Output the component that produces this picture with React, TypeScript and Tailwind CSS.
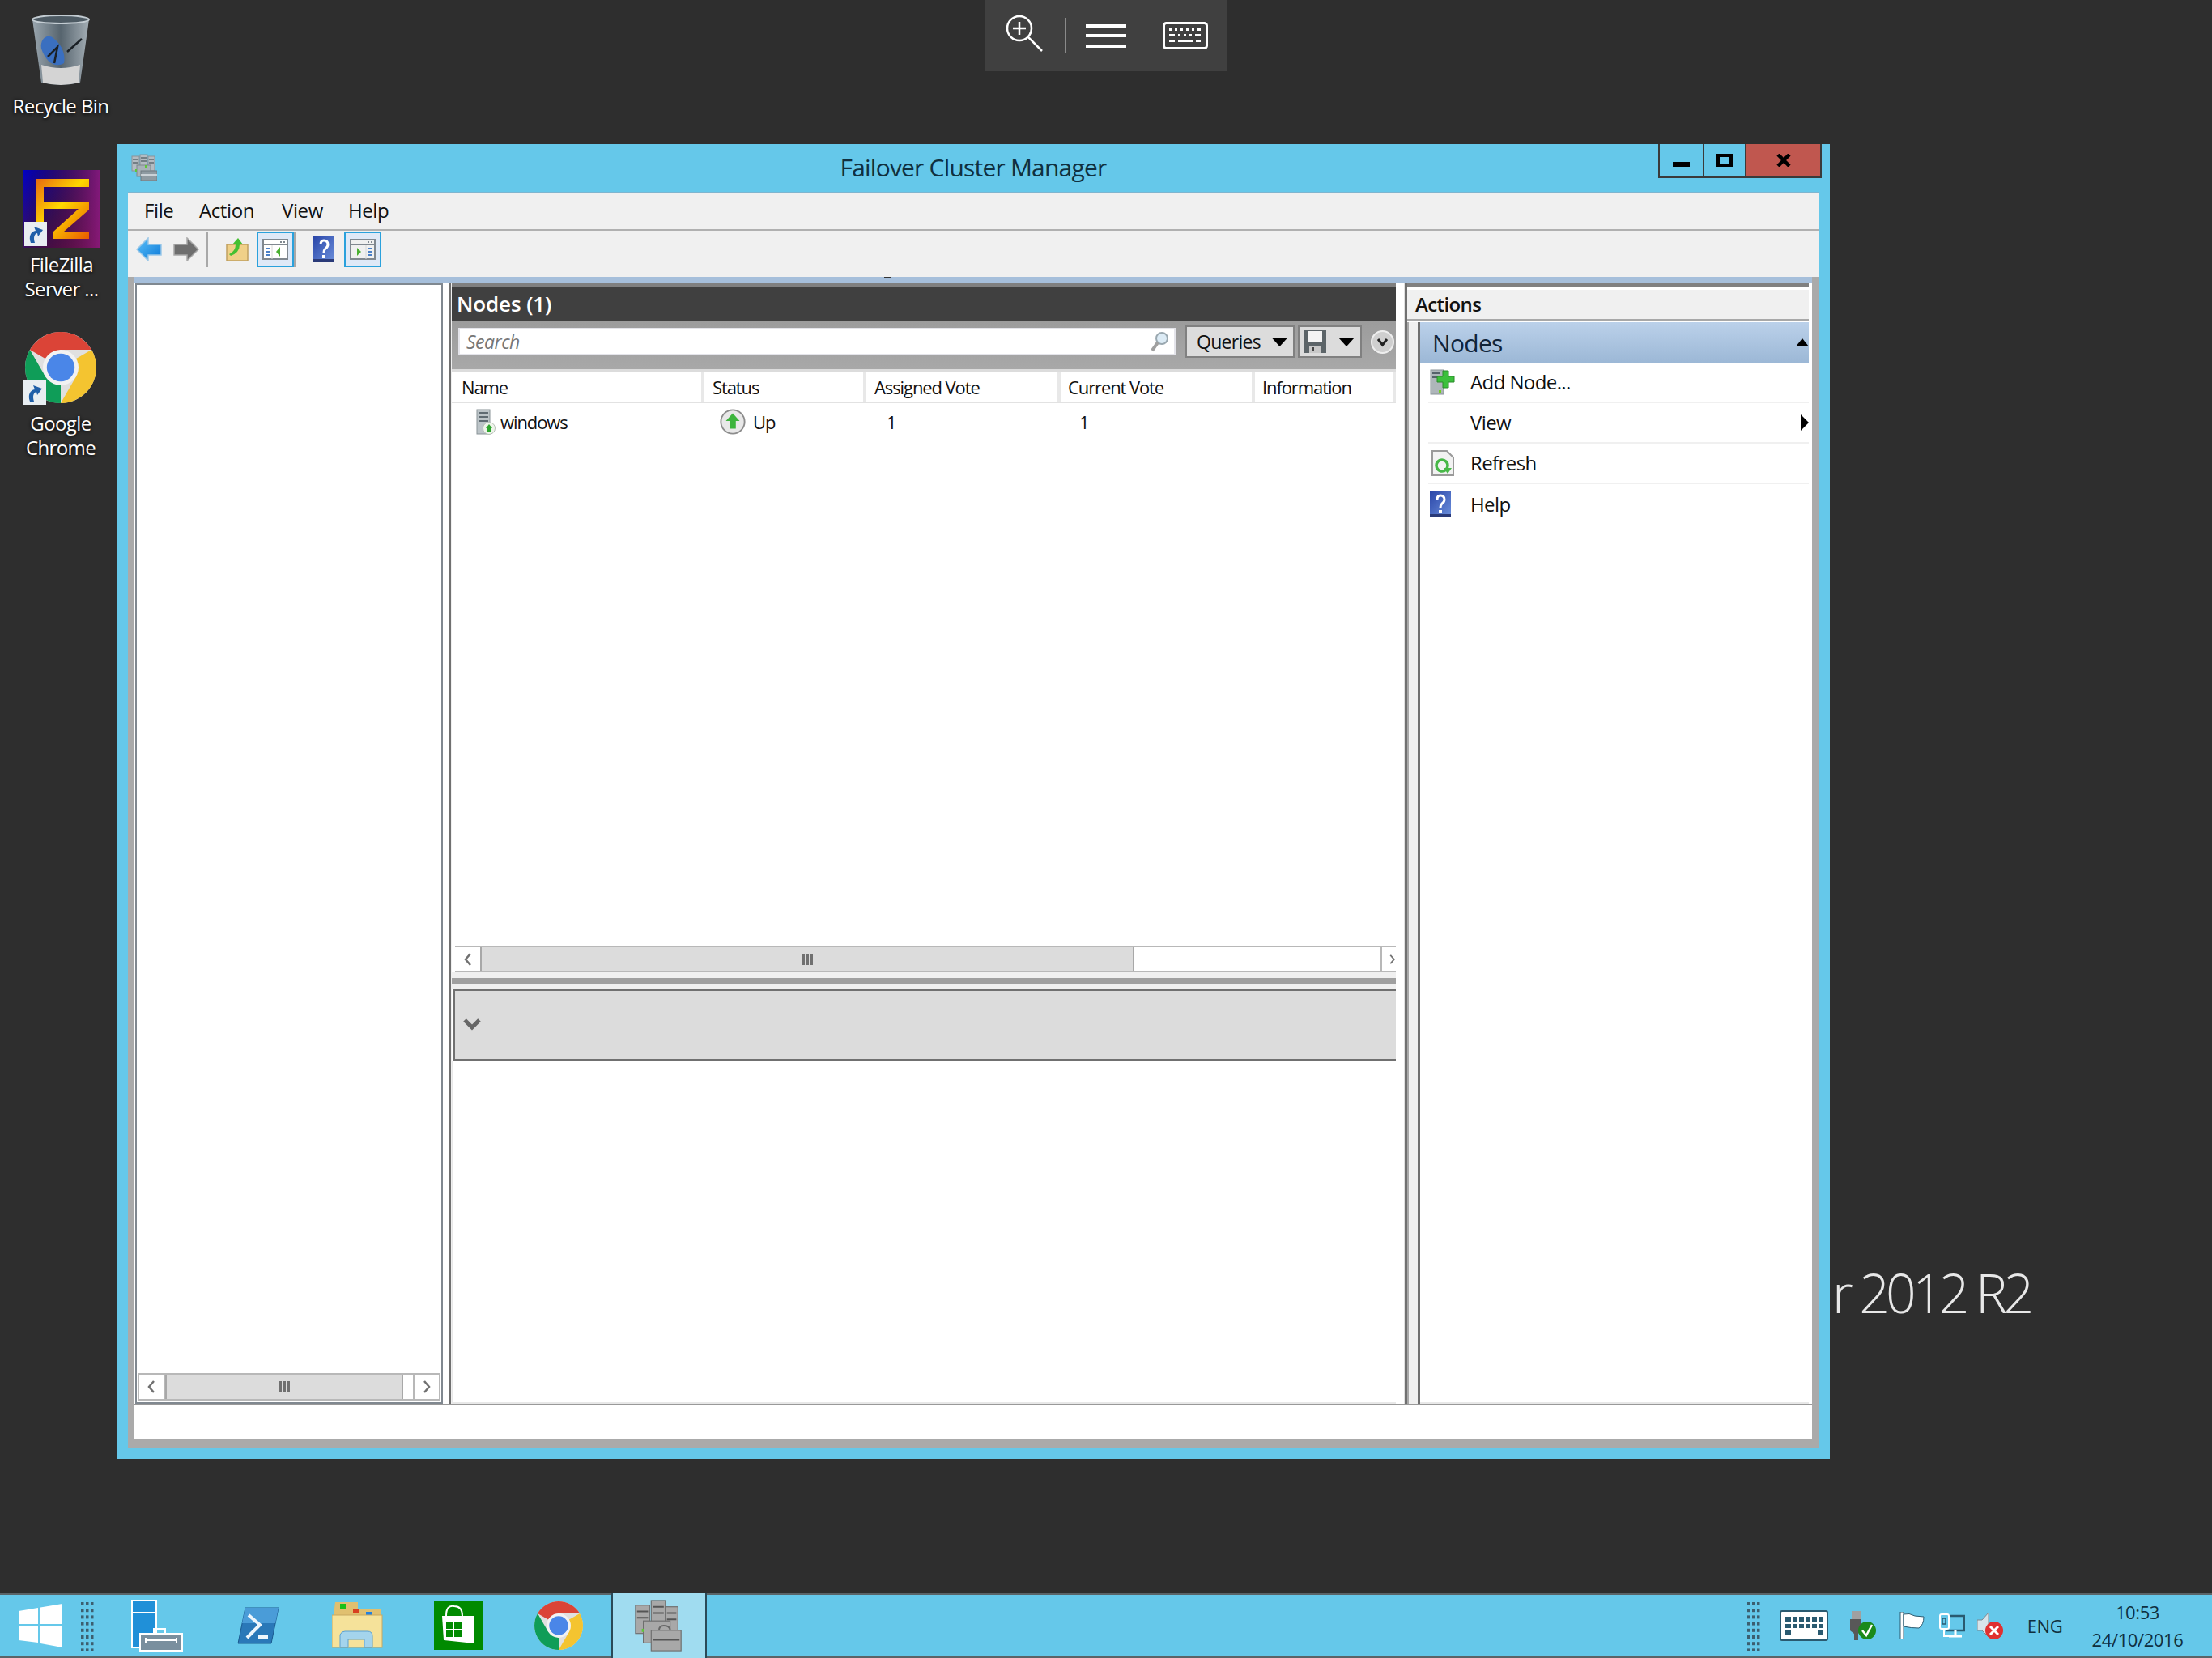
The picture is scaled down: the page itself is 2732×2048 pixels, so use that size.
import React from "react";

const FONT = "font-['Open_Sans','Noto_Sans',sans-serif]";

function Chrome({ size }: { size: number }) {
  const wedge = "M24 13 L43.05 13 A22 22 0 0 0 4.95 13 L14.47 18.5 Z";
  return (
    <svg width={size} height={size} viewBox="2 2 44 44">
      <circle cx="24" cy="24" r="22" fill="#e0e0e0" />
      <path d={wedge} fill="#db4437" />
      <path d={wedge} fill="#f4c430" transform="rotate(120 24 24)" />
      <path d={wedge} fill="#0f9d58" transform="rotate(240 24 24)" />
      <circle cx="24" cy="24" r="11" fill="#f2f2f2" />
      <circle cx="24" cy="24" r="8.6" fill="#4a86e8" />
    </svg>
  );
}

function ShortcutOverlay() {
  return (
    <svg width="28" height="30" viewBox="0 0 28 30">
      <rect width="28" height="30" fill="#e8eef2" />
      <path d="M8 26 C5 18 8 12 14 11 L12 6 L23 10 L17 18 L16 14 C12 15 11 20 13 26 Z" fill="#1f5fa8" />
    </svg>
  );
}

function RecycleBin() {
  return (
    <svg width="72" height="88" viewBox="0 0 72 88">
      <defs>
        <linearGradient id="rb" x1="0" x2="1" y1="0" y2="0">
          <stop offset="0" stopColor="#9aa6ae" />
          <stop offset="0.5" stopColor="#56646e" />
          <stop offset="1" stopColor="#a4aeb5" />
        </linearGradient>
      </defs>
      <path d="M1 6 L71 6 L60 84 Q36 90 12 84 Z" fill="url(#rb)" />
      <ellipse cx="36" cy="6" rx="35" ry="5" fill="#4d5a63" stroke="#c3ccd2" strokeWidth="2" />
      <path d="M12 62 Q36 70 60 62 L58 84 Q36 90 14 84 Z" fill="#d4d4d4" />
      <path d="M12 42 C10 30 20 22 28 30 C38 38 42 50 40 60 C30 66 18 60 12 42 Z" fill="#3a6fc0" />
      <path d="M20 52 L32 40 L28 60 M44 46 L62 30" stroke="#1a2026" strokeWidth="2.5" fill="none" />
    </svg>
  );
}

function FileZilla() {
  return (
    <svg width="96" height="96" viewBox="0 0 96 96">
      <defs>
        <linearGradient id="fzbg" x1="0" x2="1" y1="0" y2="1">
          <stop offset="0" stopColor="#0000c8" />
          <stop offset="0.5" stopColor="#3a1060" />
          <stop offset="1" stopColor="#7a1030" />
        </linearGradient>
        <linearGradient id="fzbg2" x1="0" x2="1" y1="0" y2="0">
          <stop offset="0" stopColor="#000000" stopOpacity="0" />
          <stop offset="1" stopColor="#8a1a80" stopOpacity="0.9" />
        </linearGradient>
        <linearGradient id="fzl" x1="0" x2="1" y1="0" y2="1">
          <stop offset="0" stopColor="#e86a10" />
          <stop offset="0.45" stopColor="#ffd800" />
          <stop offset="1" stopColor="#e85a00" />
        </linearGradient>
      </defs>
      <rect width="96" height="96" fill="url(#fzbg)" />
      <rect width="96" height="96" fill="url(#fzbg2)" />
      <path d="M17 11 H82 V21 H26 V39 H82 V49 L51 76 H82 V85 H38 V76 L69 48 H26 V72 H17 Z" fill="url(#fzl)" />
    </svg>
  );
}

function DesktopIcon(props: { x: number; y: number; lines: string[]; children: React.ReactNode; gap: number }) {
  return (
    <div className="absolute flex w-[150px] flex-col items-center" style={{ left: props.x, top: props.y }}>
      <div className="relative">{props.children}</div>
      <div className={`${FONT} text-center text-[24px] leading-[30px] tracking-[-0.6px] text-white [text-shadow:0_1px_4px_#000]`} style={{ marginTop: props.gap }}>
        {props.lines.map((l) => (
          <div key={l}>{l}</div>
        ))}
      </div>
    </div>
  );
}

function TopBar() {
  return (
    <div className="absolute left-[1216px] top-0 flex h-[88px] w-[300px] items-center bg-[#404040]">
      <svg width="56" height="56" viewBox="0 0 56 56" className="ml-[24px] mt-[2px]">
        <circle cx="19" cy="18" r="15" fill="none" stroke="#fff" strokeWidth="2.5" />
        <path d="M19 10 V26 M11 18 H27 M30 29 L47 46" stroke="#fff" strokeWidth="2.5" fill="none" />
      </svg>
      <div className="ml-[19px] h-[44px] w-[1px] bg-[#8a8a8a]" />
      <div className="ml-[25px] flex h-[29px] w-[50px] flex-col justify-between">
        <div className="h-[4px] bg-white" />
        <div className="h-[4px] bg-white" />
        <div className="h-[4px] bg-white" />
      </div>
      <div className="ml-[24px] h-[44px] w-[1px] bg-[#8a8a8a]" />
      <svg width="56" height="34" viewBox="0 0 56 34" className="ml-[20px]">
        <rect x="1.5" y="1.5" width="53" height="31" rx="3" fill="none" stroke="#fff" strokeWidth="3" />
        <path d="M8 8h4v3H8zM15 8h3v3h-3zM22 8h3v3h-3zM29 8h3v3h-3zM36 8h3v3h-3zM43 8h4v3h-4zM8 15h7v3H8zM19 15h3v3h-3zM26 15h3v3h-3zM33 15h3v3h-3zM40 15h7v3h-7zM8 22h7v3H8zM19 22h18v3H19zM41 22h6v3h-6z" fill="#fff" />
      </svg>
    </div>
  );
}

function ServerIcon({ className }: { className?: string }) {
  return (
    <svg width="32" height="34" viewBox="0 0 32 34" className={className}>
      <g fill="#b4bcc2" stroke="#8a9298" strokeWidth="1">
        <rect x="1" y="3" width="9" height="18" />
        <rect x="11" y="1" width="9" height="20" />
        <rect x="21" y="3" width="8" height="18" />
      </g>
      <path d="M2 7h7M2 11h7M12 5h7M12 9h7M22 7h6M22 11h6" stroke="#5f6b72" strokeWidth="1.5" />
      <rect x="7" y="14" width="17" height="14" fill="#a8b2b8" stroke="#7c868c" />
      <rect x="12" y="21" width="20" height="12" fill="#8f9ba2" stroke="#6f7a80" />
      <path d="M12 26h20" stroke="#dfe5e8" strokeWidth="1.5" />
      <rect x="5" y="19" width="2" height="3" fill="#5fc63a" />
      <rect x="17" y="14" width="2" height="3" fill="#5fc63a" />
    </svg>
  );
}

function TitleBar() {
  return (
    <div className="relative flex h-[59px] items-center justify-center">
      <ServerIcon className="absolute left-[18px] top-[12px]" />
      <span className={`${FONT} -mt-[2px] text-[30px] leading-none tracking-[-0.8px] text-[#10303f]`}>Failover Cluster Manager</span>
      <div className="absolute right-[10px] top-0 flex h-[42px] w-[202px] border-x-2 border-b-2 border-[#3a3a3a]">
        <div className="relative flex w-[55px] justify-center border-r-2 border-[#3a3a3a]">
          <div className="mt-[22px] h-[6px] w-[21px] bg-black" />
        </div>
        <div className="flex w-[52px] justify-center border-r-2 border-[#3a3a3a]">
          <div className="mt-[12px] h-[16px] w-[20px] border-[4px] border-black" />
        </div>
        <div className="flex flex-1 justify-center bg-[#c0574f]">
          <svg width="18" height="16" viewBox="0 0 18 16" className="mt-[12px]">
            <path d="M2 1 L16 15 M16 1 L2 15" stroke="#000" strokeWidth="4.5" />
          </svg>
        </div>
      </div>
    </div>
  );
}

function MenuBar() {
  return (
    <div className={`${FONT} flex h-[46px] items-center border-t-2 border-[#7fb5cf] bg-[#f0f0f0] pb-[3px] pl-[20px] text-[24px] tracking-[-0.4px] text-[#111]`}>
      <span className="w-[68px]">File</span>
      <span className="w-[102px]">Action</span>
      <span className="w-[82px]">View</span>
      <span>Help</span>
    </div>
  );
}

function HelpIcon({ w, h }: { w: number; h: number }) {
  return (
    <svg width={w} height={h} viewBox="0 0 26 32">
      <defs>
        <linearGradient id="hp" x1="0" x2="1" y1="0" y2="1">
          <stop offset="0" stopColor="#2a46a8" />
          <stop offset="1" stopColor="#6c90dc" />
        </linearGradient>
      </defs>
      <rect width="26" height="32" fill="url(#hp)" />
      <rect x="0" y="28" width="26" height="4" fill="#2a3a78" />
      <path d="M9 10 Q9 5 13 5 Q18 5 18 10 Q18 13 15 15 Q13 17 13 20" stroke="#fff" strokeWidth="3" fill="none" />
      <rect x="11" y="23" width="4" height="4" fill="#fff" />
    </svg>
  );
}

function PaneToggle({ flip }: { flip?: boolean }) {
  return (
    <div className="flex h-[44px] w-[46px] items-center justify-center border-2 border-[#2aa1dc] bg-[#dfe9f7]">
      <svg width="32" height="26" viewBox="0 0 32 26">
        <rect x="1" y="1" width="30" height="24" fill={flip ? "#f0f0f0" : "#fff"} stroke="#808890" strokeWidth="2" />
        <path d="M1 7H31" stroke="#808890" strokeWidth="2" />
        <path d="M22 4h2M26 4h2" stroke="#808890" strokeWidth="2" />
        {flip ? (
          <>
            <path d="M20 8V25" stroke="#d8d8d8" strokeWidth="1" />
            <path d="M23 12h5M23 16h5M23 20h5" stroke="#4a80c8" strokeWidth="2" />
            <path d="M9 11 L14 16 L9 21 Z" fill="#4ab030" />
          </>
        ) : (
          <>
            <path d="M12 8V25" stroke="#d8d8d8" strokeWidth="1" />
            <path d="M4 12h5M4 16h5M4 20h5" stroke="#4a80c8" strokeWidth="2" />
            <path d="M22 10 L17 16 L22 22 Z" fill="#4ab030" />
          </>
        )}
      </svg>
    </div>
  );
}

function ToolBar() {
  return (
    <div className="flex h-[59px] items-start border-t-2 border-[#b0b0b0] bg-[#f0f0f0] pl-[10px]">
      <svg width="32" height="30" viewBox="0 0 32 30" className="mt-[8px]">
        <defs>
          <linearGradient id="ba" x1="0" x2="1" y1="0" y2="1">
            <stop offset="0" stopColor="#5cc0f8" />
            <stop offset="1" stopColor="#0a78d8" />
          </linearGradient>
        </defs>
        <path d="M1 15 L15 1 V9 H31 V22 H15 V29 Z" fill="url(#ba)" stroke="#9cc8e8" strokeWidth="1.5" />
      </svg>
      <svg width="32" height="30" viewBox="0 0 32 30" className="ml-[14px] mt-[8px]">
        <path d="M31 15 L17 1 V9 H1 V22 H17 V29 Z" fill="#6e6e6e" stroke="#a8a8a8" strokeWidth="1.5" />
      </svg>
      <div className="ml-[9px] mt-[1px] h-[44px] w-[2px] bg-[#a8a8a8]" />
      <svg width="28" height="30" viewBox="0 0 28 30" className="ml-[22px] mt-[9px]">
        <path d="M1 8 H27 V28 H1 Z" fill="#f0d088" stroke="#c0a060" strokeWidth="1.5" />
        <path d="M4 20 Q12 16 12 8 L8 8 L15 0 L21 8 L17 8 Q17 18 6 22 Z" fill="#44c030" />
      </svg>
      <div className="ml-[10px] mt-[1px] flex">
        <PaneToggle />
        <div className="h-[44px] w-[2px] bg-[#a8a8a8]" />
      </div>
      <div className="ml-[22px] mt-[7px]">
        <HelpIcon w={26} h={32} />
      </div>
      <div className="ml-[12px] mt-[1px]">
        <PaneToggle flip />
      </div>
    </div>
  );
}

function Chevron({ dir }: { dir: "l" | "r" }) {
  return (
    <svg width="12" height="16" viewBox="0 0 12 16">
      <path d={dir === "l" ? "M9 1 L3 8 L9 15" : "M3 1 L9 8 L3 15"} fill="none" stroke="#707070" strokeWidth="2.5" />
    </svg>
  );
}

function Grip() {
  return (
    <div className="flex gap-[2px]">
      <div className="h-[14px] w-[3px] bg-[#707070]" />
      <div className="h-[14px] w-[3px] bg-[#707070]" />
      <div className="h-[14px] w-[3px] bg-[#707070]" />
    </div>
  );
}

function LeftPane() {
  return (
    <div className="flex w-[380px] flex-col border-2 border-[#808890] bg-white">
      <div className="flex-1" />
      <div className="mx-[1px] mb-[2px] flex h-[34px] border-2 border-[#b8b8b8] bg-white">
        <div className="flex w-[32px] items-center justify-center border-r-2 border-[#b8b8b8]">
          <Chevron dir="l" />
        </div>
        <div className="flex w-[294px] items-center justify-center border-2 border-y-0 border-[#a8a8a8] bg-[#dcdcdc]">
          <Grip />
        </div>
        <div className="flex-1" />
        <div className="flex w-[32px] items-center justify-center border-l-2 border-[#b8b8b8]">
          <Chevron dir="r" />
        </div>
      </div>
    </div>
  );
}

function Triangle({ w, h, className }: { w: number; h: number; className?: string }) {
  return (
    <svg width={w} height={h} viewBox="0 0 20 11" className={className}>
      <path d="M0 0 H20 L10 11 Z" fill="#000" />
    </svg>
  );
}

function SearchBar() {
  return (
    <div className="flex h-[59px] items-start bg-gradient-to-b from-[#9c9c9c] to-[#a8a8a8] pl-[8px]">
      <div className={`${FONT} mt-[8px] flex h-[34px] w-[886px] items-center justify-between border-2 border-[#e4e4ea] bg-white pl-[8px] pr-[6px] text-[23px] italic tracking-[-0.5px] text-[#777]`}>
        <span>Search</span>
        <svg width="24" height="26" viewBox="0 0 24 26">
          <circle cx="15" cy="9" r="7" fill="#dcebf5" stroke="#9aa8b0" strokeWidth="2" />
          <path d="M10 14 L3 24" stroke="#a0a0a0" strokeWidth="4" />
        </svg>
      </div>
      <div className={`${FONT} ml-[12px] mt-[5px] flex h-[40px] w-[135px] items-center border-2 border-[#808080] bg-[#dcdcdc] pl-[12px] text-[23px] tracking-[-0.7px] text-[#111]`}>
        <span>Queries</span>
        <Triangle w={21} h={11} className="ml-auto mr-[6px]" />
      </div>
      <div className="ml-[4px] mt-[5px] flex h-[40px] w-[79px] items-center border-2 border-[#808080] bg-[#dcdcdc] pl-[5px]">
        <svg width="28" height="28" viewBox="0 0 28 28">
          <rect width="28" height="28" fill="#5c6468" />
          <rect x="5" y="1" width="18" height="14" fill="#f4f4f4" />
          <rect x="7" y="19" width="14" height="9" fill="#c8c8c8" />
          <rect x="10" y="21" width="3" height="5" fill="#444" />
        </svg>
        <Triangle w={20} h={11} className="ml-[15px]" />
      </div>
      <div className="ml-[11px] mt-[11px] flex h-[29px] w-[29px] items-center justify-center rounded-full border-2 border-[#eeeeee] bg-[#cfcfcf]">
        <svg width="15" height="12" viewBox="0 0 15 12">
          <path d="M2 2 L7.5 9 L13 2" fill="none" stroke="#222" strokeWidth="3" />
        </svg>
      </div>
    </div>
  );
}

function Cell({ w, text, pad }: { w?: number; text: string; pad: number }) {
  return (
    <div className={`flex items-center border-r-4 border-[#e8e8e8] ${w ? "" : "flex-1 border-r-0"}`} style={{ width: w, paddingLeft: pad }}>
      {text}
    </div>
  );
}

function NodeIcon() {
  return (
    <svg width="24" height="32" viewBox="0 0 24 32">
      <rect x="1" y="1" width="16" height="30" fill="#bcc4c8" stroke="#8a9498" />
      <path d="M3 5h12M3 10h12M3 15h12" stroke="#5f6b72" strokeWidth="2" />
      <circle cx="16" cy="24" r="7.5" fill="#eef4ea" stroke="#b8c0b8" />
      <path d="M16 19 L20 24 H18 V28 H14 V24 H12 Z" fill="#2ea52e" />
    </svg>
  );
}

function Table() {
  return (
    <div className={`${FONT} flex flex-1 flex-col bg-white text-[22px] tracking-[-1.1px] text-[#111]`}>
      <div className="h-[4px] bg-[#dcdcdc]" />
      <div className="flex h-[38px] border-b-2 border-[#e2e2e2]">
        <Cell w={312} pad={12} text="Name" />
        <Cell w={200} pad={10} text="Status" />
        <Cell w={240} pad={10} text="Assigned Vote" />
        <Cell w={240} pad={9} text="Current Vote" />
        <Cell pad={9} text="Information" />
      </div>
      <div className="flex h-[46px] items-center">
        <div className="flex w-[312px] items-center pl-[30px]">
          <NodeIcon />
          <span className="ml-[6px]">windows</span>
        </div>
        <div className="flex w-[200px] items-center pl-[18px]">
          <svg width="34" height="34" viewBox="0 0 36 36">
            <circle cx="18" cy="18" r="15.5" fill="#e8e8e8" stroke="#8c8c8c" strokeWidth="2" />
            <path d="M18 7 L27 17 H22 V27 H14 V17 H9 Z" fill="#3cb43c" />
          </svg>
          <span className="ml-[8px]">Up</span>
        </div>
        <div className="w-[240px] pl-[25px]">1</div>
        <div className="w-[240px] pl-[23px]">1</div>
      </div>
    </div>
  );
}

function CenterPane() {
  return (
    <div className="flex w-[1166px] flex-col overflow-hidden bg-white">
      <div className="h-[4px] bg-[#808080]" />
      <div className={`${FONT} flex h-[43px] items-center bg-[#404040] pl-[6px] text-[26px] font-semibold tracking-[-0.1px] text-white`}>Nodes (1)</div>
      <SearchBar />
      <Table />
      <div className="ml-[4px] flex h-[33px] border-y-2 border-[#b8b8b8] bg-white">
        <div className="flex w-[31px] items-center justify-center">
          <Chevron dir="l" />
        </div>
        <div className="flex w-[808px] items-center justify-center border-2 border-y-0 border-[#a8a8a8] bg-[#dcdcdc]">
          <Grip />
        </div>
        <div className="flex-1" />
        <div className="flex w-[19px] items-center justify-center overflow-hidden border-l-2 border-[#b8b8b8] pl-[8px]">
          <Chevron dir="r" />
        </div>
      </div>
      <div className="h-[7px] bg-[#f0f0f0]" />
      <div className="h-[8px] bg-[#a0a0a0]" />
      <div className="h-[6px] bg-[#f0f0f0]" />
      <div className="ml-[2px] flex h-[88px] items-center border-y-2 border-l-2 border-[#707070] bg-[#dcdcdc] pl-[10px]">
        <svg width="22" height="16" viewBox="0 0 22 16">
          <path d="M2 2 L11 11 L20 2" fill="none" stroke="#666" strokeWidth="5" />
        </svg>
      </div>
      <div className="h-[424px] border-b-2 border-l-2 border-[#e8e8e8]" />
    </div>
  );
}

function ActionRow({ label, icon, arrow, last }: { label: string; icon?: React.ReactNode; arrow?: boolean; last?: boolean }) {
  return (
    <div className={`ml-[10px] flex h-[50px] items-center ${last ? "" : "border-b-2 border-[#f0f0f0]"}`}>
      <div className="flex w-[52px] items-center justify-start pl-[2px]">{icon}</div>
      <span>{label}</span>
      {arrow ? (
        <svg width="10" height="20" viewBox="0 0 10 20" className="ml-auto">
          <path d="M0 0 L10 10 L0 20 Z" fill="#000" />
        </svg>
      ) : null}
    </div>
  );
}

function ActionsPane() {
  return (
    <div className="flex flex-1 flex-col bg-white">
      <div className="border-t-[4px] border-[#808080]" />
      <div className="h-[4px] bg-white" />
      <div className={`${FONT} flex h-[38px] items-center border-b-2 border-[#a8a8a8] bg-[#f0f0f0] pl-[10px] text-[24px] font-semibold tracking-[-0.6px] text-[#111]`}>Actions</div>
      <div className="h-[2px] bg-white" />
      <div className="flex flex-1">
        <div className="flex w-[16px]">
          <div className="w-[2px] bg-[#a8a8a8]" />
          <div className="flex-1 bg-[#f0f0f0]" />
          <div className="w-[3px] bg-[#707070]" />
        </div>
        <div className={`${FONT} flex flex-1 flex-col border-b-2 border-[#e8e8e8] text-[24px] tracking-[-0.6px] text-[#111]`}>
          <div className="flex h-[50px] items-center justify-between bg-gradient-to-b from-[#bbd1ea] to-[#9cb8d6] pl-[15px] text-[30px] tracking-[-0.7px] text-[#10243a]">
            <span>Nodes</span>
            <svg width="16" height="10" viewBox="0 0 16 10">
              <path d="M0 10 L8 0 L16 10 Z" fill="#000" />
            </svg>
          </div>
          <ActionRow
            label="Add Node..."
            icon={
              <svg width="32" height="32" viewBox="0 0 32 32">
                <rect x="1" y="1" width="16" height="30" fill="#aeb6ba" stroke="#8a9498" />
                <path d="M3 5h10M3 10h10" stroke="#55626a" strokeWidth="2" />
                <rect x="11" y="26" width="3" height="3" fill="#70d020" />
                <path d="M16 2h7v7h7v7h-7v7h-7v-7H9V9h7z" fill="#3cc03c" stroke="#2a8a2a" />
              </svg>
            }
          />
          <ActionRow label="View" arrow />
          <ActionRow
            label="Refresh"
            icon={
              <svg width="28" height="32" viewBox="0 0 28 32" className="ml-[2px]">
                <path d="M1 1 H19 L27 9 V31 H1 Z" fill="#f2f2f2" stroke="#9a9a9a" strokeWidth="2" />
                <circle cx="13" cy="19" r="7" fill="none" stroke="#48b848" strokeWidth="3.5" />
                <path d="M15 22 L25 22 L20 29 Z" fill="#48b848" />
              </svg>
            }
          />
          <ActionRow label="Help" last icon={<HelpIcon w={26} h={32} />} />
        </div>
      </div>
    </div>
  );
}

function Splitter() {
  return (
    <div className="flex w-[14px] bg-[#f0f0f0]">
      <div className="w-[10px] bg-white" />
      <div className="w-[1px] bg-[#e0e0e0]" />
      <div className="w-[3px] bg-[#707070]" />
    </div>
  );
}

function AppWindow() {
  return (
    <div className="absolute left-[144px] top-[178px] flex h-[1624px] w-[2116px] flex-col bg-[#65c8ea]">
      <TitleBar />
      <div className="mx-[14px] flex flex-1 flex-col">
        <MenuBar />
        <ToolBar />
        <div className="flex flex-1 flex-col bg-[#aaaaaa] px-[8px] pb-[10px]">
          <div className="relative h-[8px] bg-[#a6bfdb]">
            <div className="absolute left-[926px] top-0 h-[2px] w-[8px] bg-[#333]" />
          </div>
          <div className="flex h-[1384px] bg-white pl-[1px]">
            <LeftPane />
            <div className="flex w-[11px] bg-[#f0f0f0]">
              <div className="w-[7px] bg-white" />
              <div className="w-[3px] bg-[#707070]" />
            </div>
            <CenterPane />
            <Splitter />
            <ActionsPane />
            <div className="w-[4px] bg-white" />
          </div>
          <div className="flex-1 border-t-2 border-[#999] bg-white" />
        </div>
      </div>
      <div className="h-[14px]" />
    </div>
  );
}

function Gripper({ className }: { className?: string }) {
  return (
    <svg width="16" height="62" viewBox="0 0 16 62" className={className}>
      {Array.from({ length: 8 }).map((_, r) =>
        [0, 6, 12].map((c) => <rect key={`${r}-${c}`} x={c} y={r * 8.2 + 2} width="3.5" height="4" fill="#3c5f70" />)
      )}
    </svg>
  );
}

function Taskbar() {
  return (
    <div className={`${FONT} flex h-[80px] items-center border-y-2 border-[#5a6468] bg-[#65c8ea]`}>
      <svg width="54" height="54" viewBox="0 0 54 54" className="ml-[23px]">
        <path d="M0 9 L24 5 V25 H0 Z M27 4.5 L54 0 V25 H27 Z M0 28 H24 V48 L0 45 Z M27 28 H54 V54 L27 49 Z" fill="#fff" />
      </svg>
      <Gripper className="ml-[23px]" />
      <svg width="64" height="64" viewBox="0 0 64 64" className="ml-[46px]">
        <rect x="1" y="1" width="30" height="58" fill="#2090d8" stroke="#fff" strokeWidth="2" />
        <path d="M0 16 H32" stroke="#fff" strokeWidth="2" />
        <rect x="28" y="36" width="14" height="8" fill="none" stroke="#fff" strokeWidth="2" />
        <rect x="11" y="42" width="52" height="21" fill="#7a8f9e" stroke="#fff" strokeWidth="2" />
        <path d="M18 50 H56 M18 47 V53 M56 47 V53" stroke="#fff" strokeWidth="2" />
      </svg>
      <svg width="52" height="46" viewBox="0 0 52 46" className="ml-[67px]">
        <path d="M10 1 H51 L42 45 H1 Z" fill="#2a78b8" stroke="#1a5a90" />
        <path d="M10 1 H51 L47 20 H6 Z" fill="#4a9cd8" />
        <path d="M14 10 L28 22 L12 38" fill="none" stroke="#eef6fc" strokeWidth="4" />
        <rect x="26" y="35" width="12" height="4" fill="#eef6fc" />
      </svg>
      <svg width="64" height="58" viewBox="0 0 64 58" className="ml-[65px]">
        <path d="M4 0 H32 V8 H60 V16 H2 Z" fill="#e0c070" />
        <rect x="10" y="2" width="7" height="6" fill="#18c018" />
        <rect x="26" y="8" width="7" height="6" fill="#d84020" />
        <rect x="42" y="12" width="7" height="6" fill="#2080e0" />
        <rect x="0" y="16" width="62" height="40" fill="#f5e29a" stroke="#c8a860" />
        <path d="M10 56 V40 Q12 36 16 36 H44 Q50 36 50 42 V56 H40 V46 H20 V56 Z" fill="#a4d4ec" stroke="#5aa0d0" />
      </svg>
      <svg width="60" height="60" viewBox="0 0 60 60" className="ml-[62px]">
        <rect width="60" height="60" fill="#008a00" />
        <path d="M15 18 Q15 4 25 6 Q35 6 35 18" fill="none" stroke="#fff" strokeWidth="2" />
        <path d="M10 18 H50 V52 L12 48 Z" fill="#fff" />
        <rect x="15" y="26" width="8" height="8" fill="#008a00" />
        <rect x="25" y="26" width="9" height="8" fill="#008a00" />
        <rect x="15" y="36" width="8" height="8" fill="#008a00" />
        <rect x="25" y="36" width="9" height="8" fill="#008a00" />
      </svg>
      <div className="ml-[64px]">
        <Chrome size={60} />
      </div>
      <div className="ml-[35px] -my-[2px] flex h-[80px] w-[118px] items-center justify-center border-x-2 border-[#2a4a58] bg-[#a0dcf0]">
        <svg width="68" height="66" viewBox="0 0 32 34">
          <g fill="#a8a8a8" stroke="#6e6e6e" strokeWidth="0.6">
            <rect x="1" y="4" width="9" height="18" />
            <rect x="11" y="1" width="9" height="20" />
            <rect x="20" y="5" width="8" height="18" />
            <rect x="6" y="14" width="17" height="14" />
            <rect x="11" y="20" width="19" height="13" />
          </g>
          <path d="M2 8h7M2 12h7M12 5h7M12 9h7M21 9h6M21 13h6M12 26h17" stroke="#555" strokeWidth="1" />
          <path d="M16 20 Q16 17 19 17 Q23 17 23 20" fill="none" stroke="#666" strokeWidth="1" />
          <rect x="5" y="19" width="1.5" height="2" fill="#5fc63a" />
        </svg>
      </div>
      <div className="ml-auto flex items-center">
        <Gripper />
        <svg width="60" height="38" viewBox="0 0 60 38" className="ml-[24px]">
          <rect x="1" y="1" width="58" height="36" rx="2" fill="#fff" stroke="#2a5a70" strokeWidth="2" />
          <path d="M7 8h7v6H7zM16 8h6v6h-6zM24 8h6v6h-6zM32 8h6v6h-6zM40 8h6v6h-6zM48 8h5v6h-5zM7 17h7v5H7zM16 17h6v5h-6zM24 17h6v5h-6zM32 17h6v5h-6zM40 17h6v5h-6zM48 17h5v5h-5zM7 25h7v6H7zM47 25h6v6h-6z" fill="#2a5a70" />
        </svg>
        <svg width="32" height="36" viewBox="0 0 32 36" className="ml-[27px]">
          <rect x="2" y="0" width="11" height="10" fill="#a0a0a0" />
          <path d="M0 10 H14 V24 L10 28 V36 H5 V28 L0 24 Z" fill="#585858" />
          <circle cx="21" cy="24" r="11" fill="#1a8a1a" />
          <path d="M15 24 L20 30 L27 17" stroke="#fff" strokeWidth="2.5" fill="none" />
        </svg>
        <svg width="32" height="34" viewBox="0 0 32 34" className="ml-[29px]">
          <path d="M1 0 V34 H5 V0 Z" fill="#fff" stroke="#2a5a70" />
          <path d="M5 3 Q12 1 19 5 L30 6 Q30 16 24 20 Q14 20 5 18 Z" fill="#fff" stroke="#2a5a70" />
        </svg>
        <svg width="32" height="30" viewBox="0 0 32 30" className="ml-[17px]">
          <rect x="10" y="3" width="21" height="18" fill="none" stroke="#2a5a70" strokeWidth="2.5" />
          <path d="M20 21 V27 M12 28 H28" stroke="#fff" strokeWidth="3" />
          <rect x="1" y="1" width="11" height="18" rx="2" fill="#65c8ea" stroke="#fff" strokeWidth="2" />
          <rect x="4" y="6" width="4" height="7" fill="none" stroke="#2a5a70" strokeWidth="1.5" />
          <path d="M6 19 V28 H12" stroke="#fff" strokeWidth="2" fill="none" />
        </svg>
        <svg width="32" height="36" viewBox="0 0 32 36" className="ml-[15px]">
          <path d="M0 11 H6 L14 2 V32 L6 24 H0 Z" fill="#d8e4ea" stroke="#7a8a92" />
          <circle cx="21" cy="24" r="11" fill="#e03030" />
          <path d="M16 19 L26 29 M26 19 L16 29" stroke="#fff" strokeWidth="3" />
        </svg>
        <span className="ml-[29px] w-[45px] text-center text-[22px] tracking-[-0.4px] text-[#10303f]">ENG</span>
        <div className="ml-[34px] mr-[34px] flex w-[116px] flex-col items-center text-[22px] leading-[34px] tracking-[-0.4px] text-[#10303f]">
          <span>10:53</span>
          <span>24/10/2016</span>
        </div>
      </div>
    </div>
  );
}

export default function App() {
  return (
    <div className="flex h-[2048px] w-[2732px] flex-col overflow-hidden bg-[#2e2e2e]">
      <div className="relative flex-1">
        <div className={`${FONT} absolute left-[2263px] top-[1556px] text-[66px] font-light leading-[80px] tracking-[-4.8px] text-[#e8e8e8]`}>r 2012 R2</div>
        <DesktopIcon x={0} y={18} gap={10} lines={["Recycle Bin"]}>
          <RecycleBin />
        </DesktopIcon>
        <DesktopIcon x={1} y={210} gap={6} lines={["FileZilla", "Server ..."]}>
          <FileZilla />
          <div className="absolute bottom-[2px] left-[2px]">
            <ShortcutOverlay />
          </div>
        </DesktopIcon>
        <DesktopIcon x={0} y={410} gap={10} lines={["Google", "Chrome"]}>
          <Chrome size={88} />
          <div className="absolute -bottom-[2px] -left-[2px]">
            <ShortcutOverlay />
          </div>
        </DesktopIcon>
        <TopBar />
        <AppWindow />
      </div>
      <Taskbar />
    </div>
  );
}
